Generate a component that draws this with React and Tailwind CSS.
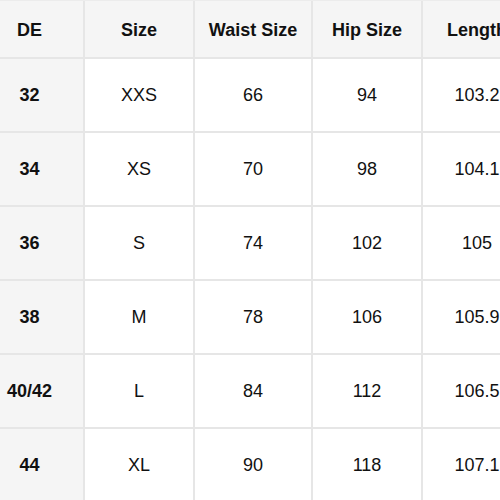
import React from 'react';

const headers = ['DE', 'Size', 'Waist Size', 'Hip Size', 'Length'];
const rows = [
  ['32', 'XXS', '66', '94', '103.2'],
  ['34', 'XS', '70', '98', '104.1'],
  ['36', 'S', '74', '102', '105'],
  ['38', 'M', '78', '106', '105.9'],
  ['40/42', 'L', '84', '112', '106.5'],
  ['44', 'XL', '90', '118', '107.1'],
];

const widths = ['w-[85px] pr-[24px]', 'w-[110px]', 'w-[118px]', 'w-[110px]', 'w-[110px]'];

const App = () => {
  return (
    <div
      className="w-[500px] h-[500px] overflow-hidden bg-white text-[#111] text-[18px]"
      style={{ fontFamily: '"Liberation Sans", Arial, sans-serif' }}
    >
      <div className="w-max border-t border-[#ececec]">
        <div className="flex h-[58px] bg-[#f5f5f5] border-b-2 border-[#e6e6e6]">
          {headers.map((h, i) => (
            <div
              key={h}
              className={`${widths[i]} shrink-0 flex items-center justify-center font-bold border-r-2 border-[#e6e6e6] whitespace-nowrap pt-[2px]`}
            >
              {h}
            </div>
          ))}
        </div>
        {rows.map((r) => (
          <div key={r[0]} className="flex h-[74px] border-b-2 border-[#e6e6e6]">
            {r.map((c, i) => (
              <div
                key={i}
                className={`${widths[i]} shrink-0 flex items-center justify-center border-r-2 border-[#e6e6e6] whitespace-nowrap ${i === 0 ? 'bg-[#f5f5f5] font-bold' : 'bg-white'}`}
              >
                {c}
              </div>
            ))}
          </div>
        ))}
      </div>
    </div>
  );
};

export default App;
